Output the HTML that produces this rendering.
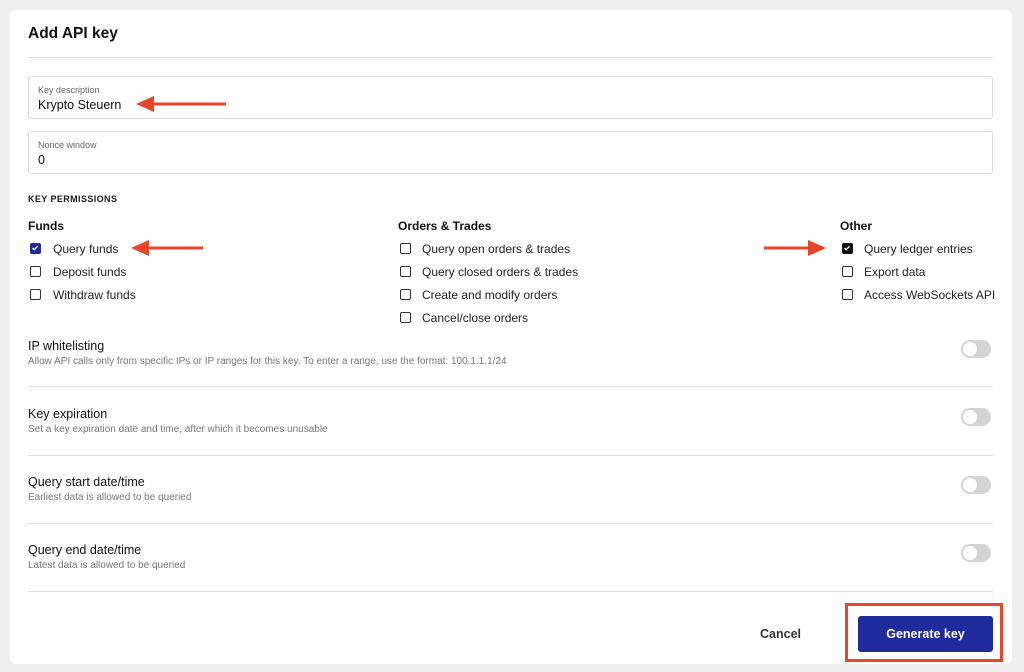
<!DOCTYPE html>
<html><head><meta charset="utf-8"><style>
*{margin:0;padding:0;box-sizing:border-box}
body{width:1024px;height:672px;background:#efefef;font-family:"Liberation Sans",sans-serif;color:#1a1a1a;position:relative;overflow:hidden}
.card{position:absolute;left:10px;top:10px;width:1002px;height:654px;background:#fff;border-radius:6px}
.a{position:absolute;white-space:nowrap}
.hr{position:absolute;left:28px;width:965px;height:1px;background:#e2e2e2}
.inp{position:absolute;left:28px;width:965px;border:1px solid #dcdcdc;border-radius:3px}
.lab{font-size:9px;color:#666}
.val{font-size:12.5px;color:#111}
.cb{position:absolute;width:11px;height:11px;border:1.5px solid #333;border-radius:2px}
.cbx{background:#1f2a9c;border-color:#1f2a9c}
.cbk{background:#111;border-color:#111}
.cb svg{position:absolute;left:0;top:0}
.t{font-size:12px;color:#222}
.h{font-size:12px;font-weight:bold;color:#111}
.tg{position:absolute;left:961px;width:30px;height:18px;border-radius:9px;background:#d4d4d4}
.tg:after{content:"";position:absolute;left:2px;top:2px;width:14px;height:14px;border-radius:50%;background:#fff}
.st{font-size:12.5px;color:#111}
.sd{font-size:10px;color:#777}
</style></head><body>
<div class="card"></div>
<div class="a" style="left:28px;top:25px;font-size:15.5px;font-weight:bold;color:#111">Add API key</div>
<div class="hr" style="top:57px"></div>
<div class="inp" style="top:76px;height:43px"><div class="a lab" style="left:9px;top:8px">Key description</div><div class="a val" style="left:9px;top:21px">Krypto Steuern</div></div>
<div class="inp" style="top:131px;height:43px"><div class="a lab" style="left:9px;top:8px">Nonce window</div><div class="a val" style="left:9px;top:21px">0</div></div>
<div class="a" style="left:28px;top:194px;font-size:9px;font-weight:bold;letter-spacing:.4px">KEY PERMISSIONS</div>
<div class="a h" style="left:28px;top:219px">Funds</div>
<div class="a h" style="left:398px;top:219px">Orders &amp; Trades</div>
<div class="a h" style="left:840px;top:219px">Other</div>

<div class="cb cbx" style="left:30px;top:243px"><svg width="8" height="8" viewBox="0 0 8 8"><path d="M1.5 4l1.7 1.7L6.5 2.3" stroke="#fff" stroke-width="1.3" fill="none"/></svg></div>
<div class="a t" style="left:53px;top:242px">Query funds</div>
<div class="cb" style="left:30px;top:266px"></div><div class="a t" style="left:53px;top:265px">Deposit funds</div>
<div class="cb" style="left:30px;top:289px"></div><div class="a t" style="left:53px;top:288px">Withdraw funds</div>

<div class="cb" style="left:400px;top:243px"></div><div class="a t" style="left:422px;top:242px">Query open orders &amp; trades</div>
<div class="cb" style="left:400px;top:266px"></div><div class="a t" style="left:422px;top:265px">Query closed orders &amp; trades</div>
<div class="cb" style="left:400px;top:289px"></div><div class="a t" style="left:422px;top:288px">Create and modify orders</div>
<div class="cb" style="left:400px;top:312px"></div><div class="a t" style="left:422px;top:311px">Cancel/close orders</div>

<div class="cb cbk" style="left:842px;top:243px"><svg width="8" height="8" viewBox="0 0 8 8"><path d="M1.5 4l1.7 1.7L6.5 2.3" stroke="#fff" stroke-width="1.3" fill="none"/></svg></div>
<div class="a t" style="left:864px;top:242px">Query ledger entries</div>
<div class="cb" style="left:842px;top:266px"></div><div class="a t" style="left:864px;top:265px">Export data</div>
<div class="cb" style="left:842px;top:289px"></div><div class="a t" style="left:864px;top:288px">Access WebSockets API</div>

<div class="a st" style="left:28px;top:339px">IP whitelisting</div>
<div class="a sd" style="left:28px;top:356px">Allow API calls only from specific IPs or IP ranges for this key. To enter a range, use the format: 100.1.1.1/24</div>
<div class="tg" style="top:340px"></div>
<div class="hr" style="top:386px"></div>
<div class="a st" style="left:28px;top:407px">Key expiration</div>
<div class="a sd" style="left:28px;top:424px">Set a key expiration date and time, after which it becomes unusable</div>
<div class="tg" style="top:408px"></div>
<div class="hr" style="top:455px"></div>
<div class="a st" style="left:28px;top:475px">Query start date/time</div>
<div class="a sd" style="left:28px;top:492px">Earliest data is allowed to be queried</div>
<div class="tg" style="top:476px"></div>
<div class="hr" style="top:523px"></div>
<div class="a st" style="left:28px;top:543px">Query end date/time</div>
<div class="a sd" style="left:28px;top:560px">Latest data is allowed to be queried</div>
<div class="tg" style="top:544px"></div>
<div class="hr" style="top:591px"></div>

<div class="a" style="left:760px;top:627px;font-size:12.5px;font-weight:bold;color:#333">Cancel</div>
<div class="a" style="left:845px;top:603px;width:158px;height:59px;border:3px solid #e8462a"></div>
<div class="a" style="left:858px;top:616px;width:135px;height:36px;background:#1f2a9c;border-radius:3px;color:#fff;font-size:12.5px;font-weight:bold;text-align:center;line-height:36px">Generate key</div>

<svg class="a" style="left:0;top:0" width="1024" height="672">
<g fill="#e8462a" stroke="#e8462a" stroke-width="3">
<line x1="150" y1="104" x2="226" y2="104"/><polygon stroke="none" points="136,104 154,96 154,112"/>
<line x1="145" y1="248" x2="203" y2="248"/><polygon stroke="none" points="131,248 149,240 149,256"/>
<line x1="764" y1="248" x2="812" y2="248"/><polygon stroke="none" points="826,248 808,240 808,256"/>
</g></svg>
</body></html>
